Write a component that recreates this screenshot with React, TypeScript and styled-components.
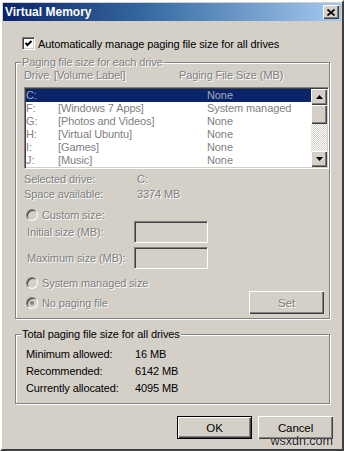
import React from "react";
import styled, { createGlobalStyle, css } from "styled-components";

const GlobalStyle = createGlobalStyle`
  html, body {
    margin: 0;
    padding: 0;
    background: #d4d0c8;
  }
  body {
    font-family: "Liberation Sans", Arial, sans-serif;
    font-size: 11px;
    letter-spacing: -0.1px;
  }
  * {
    box-sizing: border-box;
  }
`;

const drives = [
  { letter: "C:", label: "", size: "None", selected: true },
  { letter: "F:", label: "[Windows 7 Apps]", size: "System managed" },
  { letter: "G:", label: "[Photos and Videos]", size: "None" },
  { letter: "H:", label: "[Virtual Ubuntu]", size: "None" },
  { letter: "I:", label: "[Games]", size: "None" },
  { letter: "J:", label: "[Music]", size: "None" },
];

const totals = [
  ["Minimum allowed:", "16 MB"],
  ["Recommended:", "6142 MB"],
  ["Currently allocated:", "4095 MB"],
];

const disabledText = css`
  color: #808080;
  text-shadow: 1px 1px 0 #fff;
`;

const raised = css`
  background: #d4d0c8;
  border: none;
  box-shadow: inset 1px 1px #fff, inset -1px -1px #404040, inset -2px -2px #808080;
`;

const Window = styled.div`
  position: relative;
  width: 344px;
  height: 451px;
  background: #d4d0c8;
  border: 2px solid;
  border-color: #fff #404040 #404040 #fff;
  padding: 1px;
  display: flex;
  flex-direction: column;
`;

const TitleBar = styled.div`
  height: 18px;
  display: flex;
  align-items: center;
  justify-content: space-between;
  padding: 0 2px 0 2px;
  background: linear-gradient(90deg, #0a246a 0%, #3a6ea5 45%, #a6caf0 100%);
`;

const Title = styled.span`
  color: #fff;
  font-weight: bold;
  font-size: 12px;
  letter-spacing: 0;
`;

const CloseButton = styled.div`
  ${raised};
  width: 16px;
  height: 14px;
  display: flex;
  align-items: center;
  justify-content: center;
`;

const CheckRow = styled.label`
  display: flex;
  align-items: center;
  height: 13px;
  margin: 16px 0 0 19px;
  color: #000;
`;

const CheckBox = styled.span`
  width: 13px;
  height: 13px;
  margin-right: 3px;
  background: #fff;
  border: 1px solid;
  border-color: #808080 #fff #fff #808080;
  box-shadow: inset 1px 1px #404040, inset -1px -1px #d4d0c8;
  display: flex;
  align-items: center;
  justify-content: center;
`;

const GroupBox = styled.fieldset<{ $top: number }>`
  margin: ${(p) => p.$top}px 11px 0 12px;
  padding: 0 0 0 5px;
  min-width: 0;
  border: 1px solid #808080;
  box-shadow: inset 1px 1px #fff, 1px 1px #fff;
`;

const Legend = styled.legend<{ $disabled?: boolean }>`
  padding: 0 1px;
  line-height: 13px;
  background: #d4d0c8;
  color: #000;
  ${(p) => p.$disabled && disabledText};
`;

const GroupBody = styled.div<{ $pad: string }>`
  padding: ${(p) => p.$pad};
  display: flex;
  flex-direction: column;
`;

const HeaderRow = styled.div`
  display: grid;
  grid-template-columns: 30px 125px auto;
  height: 13px;
  line-height: 13px;
  ${disabledText};
`;

const ListBox = styled.div`
  margin-top: 5px;
  height: 82px;
  padding: 1px;
  background: #fff;
  border: 1px solid;
  border-color: #808080 #fff #fff #808080;
  box-shadow: inset 1px 1px #404040, inset -1px -1px #d4d0c8;
  display: flex;
`;

const Rows = styled.div`
  flex: 1;
`;

const ListRow = styled.div<{ $selected?: boolean }>`
  display: grid;
  grid-template-columns: 32px 149px auto;
  height: 13px;
  line-height: 13px;
  white-space: nowrap;
  color: ${(p) => (p.$selected ? "#a3a8bf" : "#808080")};
  background: ${(p) => (p.$selected ? "#0a246a" : "transparent")};
`;

const ScrollBar = styled.div`
  width: 16px;
  display: flex;
  flex-direction: column;
`;

const ScrollButton = styled.div<{ $h: number }>`
  ${raised};
  height: ${(p) => p.$h}px;
  display: flex;
  align-items: center;
  justify-content: center;
`;

const Track = styled.div`
  flex: 1;
  background: repeating-conic-gradient(#fff 0 25%, #d4d0c8 0 50%) 0 0 / 2px 2px;
`;

const InfoGrid = styled.div<{ $col: number; $row: number }>`
  display: grid;
  grid-template-columns: ${(p) => p.$col}px auto;
  grid-auto-rows: ${(p) => p.$row}px;
  align-items: center;
`;

const InfoText = styled.span<{ $disabled?: boolean }>`
  color: #000;
  ${(p) => p.$disabled && disabledText};
`;

const RadioRow = styled.div<{ $mt: number }>`
  display: flex;
  align-items: center;
  height: 13px;
  margin: ${(p) => p.$mt}px 0 0 2px;
  ${disabledText};
`;

const Radio = styled.span<{ $checked?: boolean }>`
  width: 12px;
  height: 12px;
  margin-right: 4px;
  border-radius: 50%;
  background: #d4d0c8;
  border: 1px solid;
  border-color: #808080 #fff #fff #808080;
  box-shadow: inset 1px 1px #404040, inset -1px -1px #d4d0c8;
  display: flex;
  align-items: center;
  justify-content: center;
  &::after {
    content: "";
    width: 4px;
    height: 4px;
    border-radius: 50%;
    background: ${(p) => (p.$checked ? "#808080" : "transparent")};
  }
`;

const FieldRow = styled.div<{ $mt: number }>`
  display: flex;
  align-items: center;
  height: 22px;
  margin-top: ${(p) => p.$mt}px;
  padding-left: 3px;
`;

const FieldLabel = styled.span`
  width: 107px;
  ${disabledText};
`;

const Input = styled.div`
  width: 74px;
  height: 22px;
  background: #d4d0c8;
  border: 1px solid;
  border-color: #808080 #fff #fff #808080;
  box-shadow: inset 1px 1px #404040, inset -1px -1px #d4d0c8;
`;

const LastRow = styled.div`
  display: flex;
  align-items: center;
  justify-content: space-between;
  margin-top: 2px;
  height: 23px;
  padding-right: 5px;
`;

const Button = styled.div<{ $default?: boolean; $disabled?: boolean }>`
  ${raised};
  width: 75px;
  height: 23px;
  display: flex;
  align-items: center;
  justify-content: center;
  color: #000;
  font-size: 11.5px;
  ${(p) => p.$disabled && disabledText};
  ${(p) =>
    p.$default &&
    css`
      border: 1px solid #000;
    `};
`;

const Footer = styled.div`
  display: flex;
  justify-content: flex-end;
  gap: 6px;
  margin-top: 12px;
  padding-right: 8px;
`;

const Watermark = styled.span`
  position: absolute;
  right: 9px;
  bottom: 1px;
  font-size: 12.5px;
  line-height: 14px;
  letter-spacing: 0;
  color: #1a1a1a;
  text-shadow: 0 0 1px #fff;
`;

function Arrow({ down }: { down?: boolean }) {
  return (
    <svg width="7" height="4" viewBox="0 0 7 4">
      <polygon points={down ? "0,0 7,0 3.5,4" : "3.5,0 7,4 0,4"} fill="#000" />
    </svg>
  );
}

function App() {
  return (
    <Window>
      <GlobalStyle />
      <TitleBar>
        <Title>Virtual Memory</Title>
        <CloseButton>
          <svg width="8" height="7" viewBox="0 0 8 7">
            <path d="M0.5 0.5 L7.5 6.5 M7.5 0.5 L0.5 6.5" stroke="#000" strokeWidth="1.7" />
          </svg>
        </CloseButton>
      </TitleBar>

      <CheckRow>
        <CheckBox>
          <svg width="9" height="9" viewBox="0 0 9 9">
            <polyline points="1.5,4 3.5,6 7.5,2" fill="none" stroke="#000" strokeWidth="2" />
          </svg>
        </CheckBox>
        Automatically manage paging file size for all drives
      </CheckRow>

      <GroupBox $top={6}>
        <Legend $disabled>Paging file size for each drive</Legend>
        <GroupBody $pad="0 0 4px 3px">
          <HeaderRow>
            <span>Drive</span>
            <span>[Volume Label]</span>
            <span>Paging File Size (MB)</span>
          </HeaderRow>
          <ListBox>
            <Rows>
              {drives.map((d) => (
                <ListRow key={d.letter} $selected={d.selected}>
                  <span>{d.letter}</span>
                  <span>{d.label}</span>
                  <span>{d.size}</span>
                </ListRow>
              ))}
            </Rows>
            <ScrollBar>
              <ScrollButton $h={16}>
                <Arrow />
              </ScrollButton>
              <ScrollButton $h={19} />
              <Track />
              <ScrollButton $h={16}>
                <Arrow down />
              </ScrollButton>
            </ScrollBar>
          </ListBox>
          <InfoGrid $col={113} $row={15} style={{ marginTop: 2 }}>
            <InfoText $disabled>Selected drive:</InfoText>
            <InfoText $disabled>C:</InfoText>
            <InfoText $disabled>Space available:</InfoText>
            <InfoText $disabled>3374 MB</InfoText>
          </InfoGrid>
          <RadioRow $mt={7}>
            <Radio />
            Custom size:
          </RadioRow>
          <FieldRow $mt={0}>
            <FieldLabel>Initial size (MB):</FieldLabel>
            <Input />
          </FieldRow>
          <FieldRow $mt={4}>
            <FieldLabel>Maximum size (MB):</FieldLabel>
            <Input />
          </FieldRow>
          <RadioRow $mt={7}>
            <Radio />
            System managed size
          </RadioRow>
          <LastRow>
            <RadioRow $mt={0}>
              <Radio $checked />
              No paging file
            </RadioRow>
            <Button $disabled>Set</Button>
          </LastRow>
        </GroupBody>
      </GroupBox>

      <GroupBox $top={9}>
        <Legend>Total paging file size for all drives</Legend>
        <GroupBody $pad="4px 0 7px 5px">
          <InfoGrid $col={109} $row={17}>
            {totals.map(([label, value]) => (
              <React.Fragment key={label}>
                <InfoText>{label}</InfoText>
                <InfoText>{value}</InfoText>
              </React.Fragment>
            ))}
          </InfoGrid>
        </GroupBody>
      </GroupBox>

      <Footer>
        <Button $default>OK</Button>
        <Button>Cancel</Button>
      </Footer>

      <Watermark>wsxdn.com</Watermark>
    </Window>
  );
}

export default App;
